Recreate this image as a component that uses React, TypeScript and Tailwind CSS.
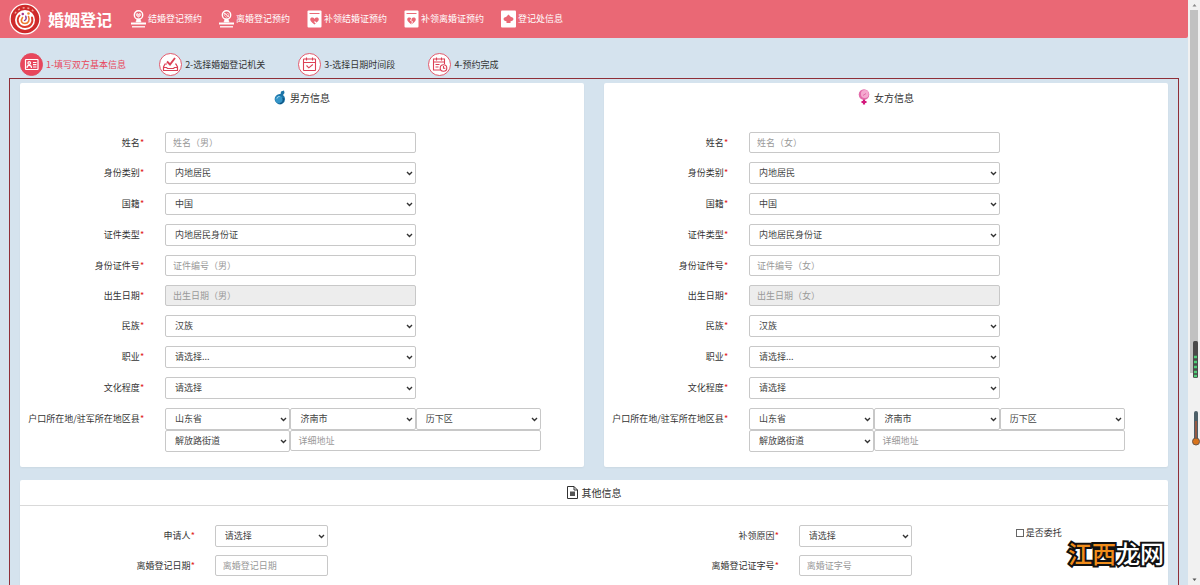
import { useId } from 'react'
import type { ReactNode } from 'react'

type Field = {
  label: string
  placeholder?: string
  options?: string[]
  disabled?: boolean
}

const navItems = [
  { label: '结婚登记预约', icon: <StampIcon /> },
  { label: '离婚登记预约', icon: <StampIcon broken /> },
  { label: '补领结婚证预约', icon: <CertificateIcon /> },
  { label: '补领离婚证预约', icon: <CertificateIcon broken /> },
  { label: '登记处信息', icon: <OfficeIcon /> },
]

const steps = [
  { label: '1-填写双方基本信息', icon: <IdCardGlyph />, active: true },
  { label: '2-选择婚姻登记机关', icon: <BallotGlyph /> },
  { label: '3-选择日期时间段', icon: <CalendarGlyph /> },
  { label: '4-预约完成', icon: <ScheduleGlyph /> },
]

const personFields = (who: string): Field[] => [
  { label: '姓名', placeholder: `姓名（${who}）` },
  { label: '身份类别', options: ['内地居民'] },
  { label: '国籍', options: ['中国'] },
  { label: '证件类型', options: ['内地居民身份证'] },
  { label: '身份证件号', placeholder: `证件编号（${who}）` },
  { label: '出生日期', placeholder: `出生日期（${who}）`, disabled: true },
  { label: '民族', options: ['汉族'] },
  { label: '职业', options: ['请选择...'] },
  { label: '文化程度', options: ['请选择'] },
]

function Logo() {
  return (
    <svg viewBox="0 0 32 32" className="size-8 shrink-0">
      <circle cx="16" cy="16" r="15.5" fill="#fff" />
      <circle cx="16" cy="16" r="14.3" fill="#cf2a2b" />
      <path d="M6 10.500a11.500 11.500 0 0 1 20 0" fill="none" stroke="#f0a79b" strokeWidth="1.500" strokeDasharray="2 2.800" />
      <circle cx="16" cy="17" r="10" fill="#fff" />
      <path d="M10.500 12.500c-4 5-.5 11.500 5.500 11.500 5.500 0 8.500-4.500 7-9.500" fill="none" stroke="#dc3a2c" strokeWidth="2" strokeLinecap="round" />
      <path d="M13.500 14.500c-2.500 3.500-.5 6 2.500 6 3.500 0 5-3.500 3.500-7" fill="none" stroke="#ee7a2d" strokeWidth="1.600" strokeLinecap="round" />
      <path d="M15.500 17.500c1.500-.8 2-2.500 1.300-4.300" fill="none" stroke="#8a3b91" strokeWidth="1.400" strokeLinecap="round" />
      <circle cx="13.800" cy="11" r="1.300" fill="#a7358a" />
      <circle cx="19.500" cy="10.500" r="1.300" fill="#ee8b2d" />
    </svg>
  )
}

function StampIcon({ broken }: { broken?: boolean }) {
  return (
    <svg viewBox="0 0 15 18" className="h-[18px] w-[15px]" fill="none" stroke="#fff">
      <circle cx="7.5" cy="5" r="4.2" strokeWidth="1.4" />
      <path d="M5.2 4.2c.8-1.2 2-.6 2.3.3.3-.9 1.500-1.500 2.300-.3.500 1.100-1 2.200-2.300 3.100-1.300-.9-2.800-2-2.300-3.100z" fill={broken ? 'none' : '#fff'} fillOpacity=".7" strokeWidth=".6" />
      {broken && <path d="M4.500 2.500l6 5" strokeWidth="1" />}
      <path d="M6 9l-1 3h5L9 9z" fill="#fff" strokeWidth=".6" />
      <path d="M0 13.500h15" strokeWidth="2" />
      <path d="M1 16.800h13" strokeWidth="1.300" />
    </svg>
  )
}

function CertificateIcon({ broken }: { broken?: boolean }) {
  return (
    <svg viewBox="0 0 15 18" className="h-[18px] w-[15px]">
      <rect x=".5" y=".5" width="14" height="17" rx="1" fill="#fff" />
      <path d="M2.500 3.500h10" stroke="#ea6875" strokeWidth="1" />
      <path d="M7.500 14.500C4 12 2.800 10.500 3.300 8.800c.6-1.700 3.200-1.600 4.200.2 1-1.800 3.600-1.900 4.200-.2.500 1.700-.7 3.200-4.200 5.700z" fill="#ea6875" />
      {broken
        ? <path d="M7.500 8.500l-1 2 2 1-1 3" fill="none" stroke="#fff" strokeWidth=".9" />
        : <path d="M7.500 11.500l2 2 3.500-3" fill="none" stroke="#fff" strokeWidth="1.100" />}
    </svg>
  )
}

function OfficeIcon() {
  return (
    <svg viewBox="0 0 15 18" className="h-[18px] w-[15px]">
      <rect y=".5" width="15" height="17" rx="1" fill="#fff" />
      <path d="M7.500 4.500l2.500 2.500c2 .2 2.700 1.500 2.300 2.800-.4 1-1.700 1.500-2.800 1.400V13h-4v-1.800c-1.100.1-2.400-.4-2.800-1.400C2.300 8.500 3 7.200 5 7z" fill="#ea6875" />
    </svg>
  )
}

function IdCardGlyph() {
  return (
    <g fill="none" stroke="#fff" strokeWidth="1.200">
      <rect x="5.500" y="6.500" width="12.500" height="10" rx=".5" />
      <circle cx="9.200" cy="10" r="1.300" />
      <path d="M7 15c0-3.500 4.500-3.500 4.500 0M13 9.500h3.500M13 11.700h3.500M13 14h3.500" />
    </g>
  )
}

function BallotGlyph() {
  return (
    <g fill="none" stroke="#dc4055" strokeWidth="1.200">
      <path d="M8 11H6l-1.500 3v3.500h14V14L17 11h-1M4.500 14.500h3l1 1h6l1-1h3" />
      <path d="M8 8.500l3 3 5-6.500" strokeWidth="1.900" />
    </g>
  )
}

function CalendarGlyph() {
  return (
    <g fill="none" stroke="#dc4055" strokeWidth="1.100">
      <rect x="5.500" y="6" width="12" height="11.500" rx=".5" />
      <path d="M5.500 9.500h12M8.500 4.500v3M14.500 4.500v3M8.500 12.500l2.300 2.300 4-3.300" />
    </g>
  )
}

function ScheduleGlyph() {
  return (
    <g fill="none" stroke="#dc4055" strokeWidth="1.100">
      <path d="M12 17H5.500V6h11v5M5.500 9h11M8.500 4.500v3M13.500 4.500v3M7.500 11.500h4M7.500 14h3" />
      <circle cx="15.500" cy="15" r="3.300" />
      <path d="M15.500 13v2.300h1.800" />
    </g>
  )
}

function MaleIcon() {
  return (
    <svg viewBox="0 0 12 15" className="h-[15px] w-3">
      <path d="M6.500 4L7 1.500 10 .5l.5 2.500-1.500 2a5.200 5.200 0 1 1-2.500-1z" fill="#1c75a8" />
      <circle cx="4.800" cy="9.300" r="3.600" fill="#3595c8" />
      <path d="M3 8.500c.5-1.500 1.500-2 2.500-2" fill="none" stroke="#b9e4f5" />
      <path d="M6 13.500c3 0 4-3 3-5.500" fill="none" stroke="#0e4b78" />
    </svg>
  )
}

function FemaleIcon() {
  return (
    <svg viewBox="0 0 12 16" className="h-4 w-3">
      <circle cx="6" cy="5.500" r="5.300" fill="#e26baa" />
      <circle cx="6.800" cy="5" r="3.900" fill="#f4a9cf" />
      <path d="M5 6.500l3-2" fill="none" stroke="#e26baa" />
      <path d="M6 10.500v5M3.500 13h5" stroke="#d3187c" strokeWidth="2.200" />
    </svg>
  )
}

function DocumentIcon() {
  return (
    <svg viewBox="0 0 11 13" className="h-[13px] w-[11px]" fill="none" stroke="#333">
      <path d="M.5.5h6.500l3.500 3.500v8.500H.5z" />
      <path d="M7 .5V4h3.500" />
      <path d="M3 5.500h5v4.500H3z" fill="#555" stroke="none" />
    </svg>
  )
}

function Select({ id, options, label }: { id?: string; options: string[]; label?: string }) {
  return (
    <span className="relative block w-full">
      <select
        id={id}
        aria-label={label}
        className="block h-[22px] w-full appearance-none rounded-xs border border-[#c8c8c8] bg-white pl-[9px] pr-4 text-[#444]"
      >
        {options.map((o) => <option key={o}>{o}</option>)}
      </select>
      <svg viewBox="0 0 7 5" className="pointer-events-none absolute right-[3px] top-[9px] h-[5px] w-[7px]">
        <path d="M1 1l2.500 2.500L6 1" fill="none" stroke="#333" strokeWidth="1.400" />
      </svg>
    </span>
  )
}

function TextInput({ id, placeholder, disabled, label }: { id?: string; placeholder?: string; disabled?: boolean; label?: string }) {
  return (
    <input
      id={id}
      type="text"
      aria-label={label}
      placeholder={placeholder}
      disabled={disabled}
      className="block h-[21px] w-full rounded-xs border border-[#c8c8c8] bg-white px-[7px] placeholder:text-[#999] disabled:bg-[#ededed]"
    />
  )
}

function Control({ id, field }: { id: string; field: Field }) {
  return field.options
    ? <Select id={id} options={field.options} />
    : <TextInput id={id} placeholder={field.placeholder} disabled={field.disabled} />
}

function Label({ id, children }: { id: string; children: ReactNode }) {
  return (
    <label htmlFor={id} className="whitespace-nowrap leading-[21px]">
      {children}<span className="text-[#e02020]">*</span>
    </label>
  )
}

function FieldRow({ field }: { field: Field }) {
  const id = useId()
  return (
    <div className="flex gap-[21px]">
      <div className="flex w-[22%] shrink-0 justify-end"><Label id={id}>{field.label}</Label></div>
      <div className="w-4/9"><Control id={id} field={field} /></div>
    </div>
  )
}

function AddressRow() {
  const id = useId()
  return (
    <div className="flex gap-[21px]">
      <div className="flex w-[22%] shrink-0 justify-end"><Label id={id}>户口所在地/驻军所在地区县</Label></div>
      <div className="grid w-2/3 grid-cols-3">
        <Select id={id} options={['山东省']} />
        <Select options={['济南市']} label="市" />
        <Select options={['历下区']} label="区县" />
        <Select options={['解放路街道']} label="街道" />
        <div className="col-span-2"><TextInput placeholder="详细地址" label="详细地址" /></div>
      </div>
    </div>
  )
}

function PersonCard({ title, icon, who }: { title: string; icon: ReactNode; who: string }) {
  return (
    <section className="rounded-xs bg-white pb-[15px] shadow-xs">
      <h2 className="flex h-7 items-center justify-center gap-1 text-[10px]">{icon}{title}</h2>
      <div className="flex flex-col gap-[9px] pt-[21px]">
        {personFields(who).map((f) => <FieldRow key={f.label} field={f} />)}
        <AddressRow />
      </div>
    </section>
  )
}

function OtherField({ field }: { field: Field }) {
  const id = useId()
  return (
    <div className="flex grow gap-5">
      <div className="flex w-[31%] shrink-0 justify-end"><Label id={id}>{field.label}</Label></div>
      <div className="w-1/5"><Control id={id} field={field} /></div>
    </div>
  )
}

function OtherCard() {
  return (
    <section className="mt-[13px] rounded-xs bg-white pb-5 shadow-xs">
      <h2 className="flex h-[26px] items-center justify-center gap-1 border-b border-[#d9d9d9] text-[10px]"><DocumentIcon />其他信息</h2>
      <div className="grid grid-cols-2 gap-x-5 gap-y-2 pt-[19px]">
        <OtherField field={{ label: '申请人', options: ['请选择'] }} />
        <div className="relative flex">
          <OtherField field={{ label: '补领原因', options: ['请选择'] }} />
          <label className="absolute left-[73%] top-0 flex items-center gap-0.5 leading-4">
            <input type="checkbox" className="size-2 appearance-none border border-[#666] bg-white checked:bg-[#666]" />
            是否委托
          </label>
        </div>
        <OtherField field={{ label: '离婚登记日期', placeholder: '离婚登记日期' }} />
        <OtherField field={{ label: '离婚登记证字号', placeholder: '离婚证字号' }} />
      </div>
    </section>
  )
}

function ScrollRail() {
  return (
    <div className="relative flex w-3 shrink-0 flex-col items-center bg-[#f1f1f1]">
      <svg viewBox="0 0 11 10" className="h-[10px] w-[11px] shrink-0"><path d="M3.500 6.500l2-2.500 2 2.500z" fill="#888" /></svg>
      <div className="h-[62%] w-2 shrink-0 bg-[#c1c1c1]" />
      <svg viewBox="0 0 11 10" className="mt-auto h-[10px] w-[11px] shrink-0"><path d="M3.500 3.500l2 2.500 2-2.500z" fill="#555" /></svg>
      <svg viewBox="0 0 8 105" className="absolute right-0 top-[341px] h-[105px] w-2">
        <rect x="1" y="0" width="5" height="37" rx="1.500" fill="#4a4a4a" />
        <path d="M2 16h3M2 21h3M2 26h3M2 31h3M2 35h3" stroke="#4fce78" strokeWidth="2.600" />
        <path d="M4 72v28" stroke="#4d5f68" strokeWidth="4" strokeLinecap="round" />
        <path d="M4 80v20" stroke="#a8583c" strokeWidth="1.600" />
        <circle cx="4" cy="100.500" r="3.500" fill="#d8731b" stroke="#6a5648" />
      </svg>
    </div>
  )
}

export default function App() {
  return (
    <div className="relative flex h-screen overflow-hidden bg-[#d5e3ee] font-['Noto_Sans_CJK_SC','Liberation_Sans',sans-serif] text-[9px] text-[#333]">
      <div className="min-w-0 grow">
        <header className="flex h-[38px] items-center rounded-br-xs bg-[#ea6875] pl-[9px] text-white">
          <Logo />
          <h1 className="ml-[7px] text-base font-bold">婚姻登记</h1>
          <nav className="ml-[19px] flex gap-[17px]">
            {navItems.map((item) => (
              <a key={item.label} href="#" className="flex items-center gap-0.5 whitespace-nowrap">
                {item.icon}{item.label}
              </a>
            ))}
          </nav>
        </header>

        <ol className="flex gap-[33px] pb-0.5 pl-5 pt-[15px]">
          {steps.map((s) => (
            <li key={s.label} className={`flex items-center gap-[3px] whitespace-nowrap ${s.active ? 'text-[#e8475c]' : ''}`}>
              <svg viewBox="0 0 23 23" className="size-[23px]">
                <circle cx="11.500" cy="11.500" r="11" fill={s.active ? '#e8475c' : '#fff'} stroke="#e0495d" strokeWidth=".9" />
                {s.icon}
              </svg>
              {s.label}
            </li>
          ))}
        </ol>

        <main className="mx-[9px] border border-[#8f2f38] px-[10px] pb-5 pt-1">
          <div className="grid grid-cols-2 gap-5">
            <PersonCard title="男方信息" icon={<MaleIcon />} who="男" />
            <PersonCard title="女方信息" icon={<FemaleIcon />} who="女" />
          </div>
          <OtherCard />
        </main>
      </div>

      <ScrollRail />

      <div className="absolute bottom-4 right-9 text-2xl font-medium text-white [-webkit-text-stroke:4px_#111] [paint-order:stroke_fill]">
        <span className="text-[#f08c1a]">江西</span>龙网
      </div>
    </div>
  )
}
